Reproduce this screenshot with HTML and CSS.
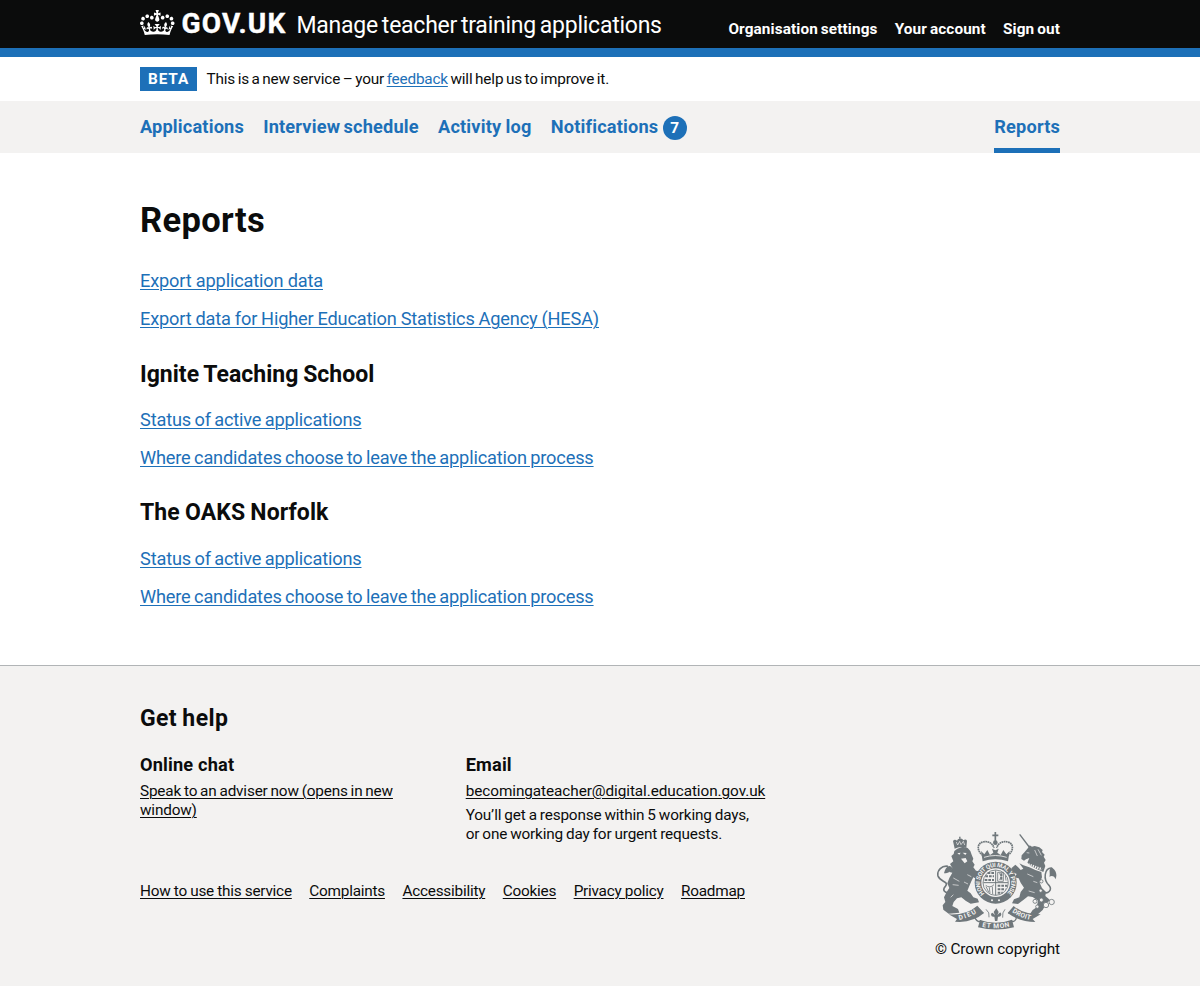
FILE: index.html
```html
<!DOCTYPE html>
<html lang="en">
<head>
<meta charset="utf-8">
<title>Reports - Manage teacher training applications - GOV.UK</title>
<link rel="stylesheet" href="styles.css">
</head>
<body>
<header class="header">
  <div class="container header-row">
    <a class="logo" href="#">
      <svg class="crown" viewBox="0 0 132 97" aria-hidden="true"><path fill="currentColor" d="M25 30.2c3.5 1.5 7.7-.2 9.1-3.7 1.5-3.6-.2-7.8-3.9-9.2-3.6-1.4-7.6.3-9.1 3.9-1.4 3.5.3 7.5 3.9 9zM9 39.5c3.6 1.5 7.8-.2 9.2-3.7 1.5-3.6-.2-7.8-3.9-9.1-3.6-1.5-7.6.2-9.1 3.8-1.4 3.5.3 7.5 3.8 9zM4.4 57.2c3.5 1.5 7.7-.2 9.1-3.8 1.5-3.6-.2-7.7-3.9-9.1-3.5-1.5-7.6.3-9.1 3.8-1.4 3.5.3 7.6 3.9 9.1zm38.3-21.4c3.5 1.5 7.7-.2 9.1-3.8 1.5-3.6-.2-7.7-3.9-9.1-3.6-1.5-7.6.3-9.1 3.8-1.3 3.6.4 7.7 3.9 9.1zm64.4-5.6c-3.6 1.5-7.8-.2-9.1-3.7-1.5-3.6.2-7.8 3.8-9.2 3.6-1.4 7.7.3 9.2 3.9 1.3 3.5-.4 7.5-3.9 9zm15.9 9.3c-3.6 1.5-7.7-.2-9.1-3.7-1.5-3.6.2-7.8 3.7-9.1 3.6-1.5 7.7.2 9.2 3.8 1.5 3.5-.3 7.5-3.8 9zm4.7 17.7c-3.6 1.5-7.8-.2-9.2-3.8-1.5-3.6.2-7.7 3.9-9.1 3.6-1.5 7.7.3 9.2 3.8 1.3 3.5-.4 7.6-3.9 9.1zM89.3 35.8c-3.6 1.5-7.8-.2-9.2-3.8-1.4-3.6.2-7.7 3.9-9.1 3.6-1.5 7.7.3 9.2 3.8 1.4 3.6-.3 7.7-3.9 9.1zM69.7 17.7l8.9 4.7V9.3l-8.9 2.8c-.2-.3-.5-.6-.9-.9L72.4 0H59.6l3.5 11.2c-.3.3-.6.5-.9.9l-8.8-2.8v13.1l8.8-4.7c.3.3.6.7.9.9l-5 15.4v.1c-.2.8-.4 1.6-.4 2.4 0 4.1 3.1 7.5 7 8.1h.2c.3 0 .7.1 1 .1.4 0 .7 0 1-.1h.2c4-.6 7.1-4.1 7.1-8.1 0-.8-.1-1.7-.4-2.4V34l-5.1-15.4c.4-.2.7-.6 1-.9zM66 92.8c16.9 0 32.8 1.1 47.1 3.2 4-16.9 8.9-26.7 14-33.5l-9.6-3.4c1 4.9 1.1 7.2 0 10.2-1.5-1.4-3-4.3-4.2-8.7L108.6 76c2.8-2 5-3.2 7.5-3.3-4.4 9.4-10 11.9-13.6 11.2-4.3-.8-6.3-4.6-5.6-7.9 1-4.7 5.7-5.9 8-.5 4.3-8.7-3-11.4-7.6-8.8 7.1-7.2 7.9-13.5 2.1-21.1-8 6.1-8.1 12.3-4.5 20.8-4.7-5.4-12.1-2.5-9.5 6.2 3.4-5.2 7.9-2 7.2 3.1-.6 4.3-6.4 7.8-13.5 7.2-10.3-.9-10.9-8-11.2-13.8 2.5-.5 7.1 1.8 11 7.3L80.2 60c-4.1 4.4-8 5.3-12.3 5.4 1.4-4.4 8-11.6 8-11.6H55.5s6.4 7.2 7.9 11.6c-4.2-.1-8-1-12.3-5.4l1.4 16.4c3.9-5.5 8.5-7.7 10.9-7.3-.3 5.8-.9 12.8-11.1 13.8-7.2.6-12.9-2.9-13.5-7.2-.7-5 3.8-8.3 7.1-3.1 2.7-8.7-4.6-11.6-9.4-6.2 3.7-8.5 3.6-14.7-4.6-20.8-5.8 7.6-5 13.9 2.2 21.1-4.7-2.6-11.9.1-7.7 8.8 2.3-5.5 7.1-4.2 8.1.5.7 3.3-1.3 7.1-5.7 7.9-3.5.7-9-1.8-13.5-11.2 2.5.1 4.7 1.3 7.5 3.3l-4.7-15.4c-1.2 4.4-2.7 7.2-4.3 8.7-1.1-3-.9-5.3 0-10.2l-9.5 3.4c5 6.9 9.9 16.7 14 33.5 14.8-2.1 30.8-3.2 47.7-3.2z"/></svg>
      <span class="logotype">GOV.UK</span>
      <span class="service">Manage teacher training applications</span>
    </a>
    <nav class="account">
      <a href="#">Organisation settings</a>
      <a href="#">Your account</a>
      <a href="#">Sign out</a>
    </nav>
  </div>
</header>

<div class="container phase">
  <strong class="tag">BETA</strong>
  <span class="phase-text">This is a new service – your <a href="#">feedback</a> will help us to improve it.</span>
</div>

<div class="primary">
  <nav class="container primary-row">
    <a href="#">Applications</a>
    <a class="interview" href="#">Interview schedule</a>
    <a href="#">Activity log</a>
    <a href="#">Notifications<span class="count">7</span></a>
    <a class="current" href="#">Reports</a>
  </nav>
</div>

<main class="container main">
  <h1>Reports</h1>
  <ul class="links exports">
    <li><a href="#">Export application data</a></li>
    <li><a class="hesa" href="#">Export data for Higher Education Statistics Agency (HESA)</a></li>
  </ul>
  <h2 class="ignite">Ignite Teaching School</h2>
  <ul class="links">
    <li><a href="#">Status of active applications</a></li>
    <li><a href="#">Where candidates choose to leave the application process</a></li>
  </ul>
  <h2 class="oaks">The OAKS Norfolk</h2>
  <ul class="links">
    <li><a href="#">Status of active applications</a></li>
    <li><a href="#">Where candidates choose to leave the application process</a></li>
  </ul>
</main>

<footer class="footer">
  <div class="container footer-row">
    <div class="support">
      <h2 class="help">Get help</h2>
      <div class="contacts">
        <section>
          <h3>Online chat</h3>
          <p><a href="#">Speak to an adviser now (opens in new window)</a></p>
        </section>
        <section>
          <h3>Email</h3>
          <p><a class="email" href="#">becomingateacher@digital.education.gov.uk</a></p>
          <p class="response">You’ll get a response within 5 working days,<br>or one working day for urgent requests.</p>
        </section>
      </div>
      <nav class="meta">
        <a href="#">How to use this service</a>
        <a href="#">Complaints</a>
        <a href="#">Accessibility</a>
        <a href="#">Cookies</a>
        <a href="#">Privacy policy</a>
        <a href="#">Roadmap</a>
      </nav>
    </div>
    <a class="copyright" href="#">
      <svg class="crest" viewBox="51 36 360 294" aria-hidden="true">
        <defs>
          <path id="garter" d="M193.6 221A47 47 0 1 1 260.4 221"/>
          <path id="dieu" d="M118 300Q150 293 178 274"/>
          <path id="droit" d="M276 276Q304 295 338 301"/>
          <path id="mon" d="M186 320Q228 330 272 319"/>
        </defs>
        <!-- Lion and its crown -->
        <g class="ink">
          <path d="M104 86L99 63Q104 56 111 62Q113 56 118 56L117 50H122L121 56Q127 55 130 61Q137 55 141 62L139 84Q121 77 104 86Z"/>
          <path d="M103 93L112 86L128 80L143 84L151 93L155 104L160 116L157 124L164 134L160 142L168 152L178 154L176 162L183 168L180 178L168 176L160 172L154 184L148 198L142 212L152 220L160 232L173 236L177 247L152 251L138 243L124 232L111 235L101 246L97 258L114 267L118 278L86 281L70 269L68 256L76 246L72 232L80 216L88 204L82 190L88 174L97 158L88 156L97 144L90 132L100 124L94 108L101 102Z"/>
          <path d="M72 160C88 160 102 148 94 140C84 134 76 144 72 160Z"/>
        </g>
        <path class="line" stroke-width="5" d="M92 216C74 222 66 210 76 199C89 184 60 186 54 168C50 150 66 136 84 139"/>
        <path class="cut" stroke-width="2" d="M109 66L113 75L119 64L123 74L130 64L134 75M100 174L118 184M98 194L116 196M132 186L144 192M142 164L154 170M92 232L100 224"/>
        <path class="field" d="M112 100L122 98L118 104ZM128 98L140 99L136 105ZM123 116L137 114L142 124L134 130Z"/>
        <!-- Unicorn -->
        <path class="line" stroke-width="4" d="M299 43L330 84"/>
        <g class="ink">
          <path d="M304 117L305 106L314 96L324 84L329 76L336 80L344 78L358 82L368 90L366 96L374 104L371 110L377 120L372 128L376 138L370 156L352 148L332 138L322 128L328 114L318 118L312 122Z"/>
          <path d="M298 130L310 136L328 142L346 150L364 156L366 172L359 188L366 204L378 216L376 228L390 240L378 252L368 270L352 284L330 282L338 270L350 262L354 242L338 231L324 229L310 240L294 252L276 250L282 238L298 232L302 216L312 203L302 188L296 175L284 172L290 162L278 156L274 145L286 134L296 143L302 150L310 146Z"/>
          <path d="M394 142C406 148 414 164 406 178C404 168 396 166 388 170C392 160 384 150 394 142Z"/>
        </g>
        <path class="line" stroke-width="4.5" d="M366 214C384 226 398 210 387 196C368 178 374 144 394 144"/>
        <path class="cut" stroke-width="7" stroke-dasharray="4 3" d="M306 127Q334 136 366 148"/>
        <path class="cut" stroke-width="2" d="M320 98L328 99M344 90L352 108M354 88L364 106M322 162L340 170M326 213L344 218M340 184L352 188"/>
        <g class="link">
          <circle cx="345" cy="244" r="6"/><circle cx="352" cy="260" r="5"/><circle cx="364" cy="240" r="6"/><circle cx="378" cy="255" r="8"/><circle cx="395" cy="246" r="8"/><circle cx="364" cy="184" r="5"/><circle cx="362" cy="212" r="5"/>
        </g>
        <!-- Central crown -->
        <g class="line">
          <path stroke-width="5" d="M226 36V64M217 46H235"/>
          <path stroke-width="5" stroke-dasharray="5 1.5" d="M189 106C170 94 170 70 189 66C205 62 218 70 222 84M263 106C282 94 282 70 263 66C247 62 234 70 230 84"/>
        </g>
        <g class="ink">
          <circle cx="226" cy="68" r="7"/>
          <path d="M188 124L183 93L193 103L202 90L210 105L220 98L216 86L226 91L236 86L232 98L242 105L250 90L259 103L269 93L264 124Q226 112 188 124Z"/>
        </g>
        <path class="cut" stroke-width="2.5" d="M192 112Q226 101 260 112"/>
        <!-- Garter and quartered shield -->
        <circle class="ink" cx="227" cy="188" r="63"/>
        <circle class="field" cx="227" cy="188" r="43"/>
        <text class="motto" font-size="18"><textPath href="#garter" textLength="219">HONI SOIT QUI MAL Y PENSE</textPath></text>
        <circle class="field" cx="216" cy="241" r="3"/><circle class="field" cx="237" cy="241" r="3"/>
        <g class="line" stroke-width="2.5">
          <circle cx="227" cy="188" r="38"/>
          <path stroke-width="3" d="M227 151V226M190 188H264"/>
          <path d="M233 157H250V184H233ZM238 160L244 168L239 180M256 166L258 182M197 196Q210 206 222 194M198 200L206 216M208 202L210 220M217 200L218 222"/>
        </g>
        <path class="line" stroke-width="6" stroke-dasharray="8 3" d="M203 159H222M196 169H222M194 180H222M233 197H262M233 208H256M233 218H248M244 160V182"/>
        <!-- Ribbon and fleur-de-lis -->
        <g class="ink">
          <path d="M86 283Q139 286 172 257L192 279Q164 304 119 306L105 305L111 297Z"/>
          <path d="M281 258Q309 283 362 283L338 297L346 306Q298 306 263 279Z"/>
          <path d="M180 300Q228 317 276 299L282 322Q228 335 174 322Z"/>
        </g>
        <path class="line" stroke-width="4" d="M190 278Q160 281 166 296Q174 309 184 302M265 279Q294 281 288 297Q282 309 272 302"/>
        <path class="ink" d="M229 265L236 276L232 286Q243 270 244 284Q242 292 234 290L232 303H225L223 290Q214 292 213 284Q215 272 225 286L221 276Z"/>
        <path class="line" stroke-width="2.5" d="M198 268Q210 277 207 292M255 268Q246 277 248 293"/>
        <text class="motto" font-size="20"><textPath href="#dieu" textLength="56">DIEU</textPath></text>
        <text class="motto" font-size="20"><textPath href="#mon" textLength="84">ET MON</textPath></text>
        <text class="motto" font-size="20"><textPath href="#droit" textLength="60">DROIT</textPath></text>
      </svg>
      <span>© Crown copyright</span>
    </a>
  </div>
</footer>
</body>
</html>
```
FILE: styles.css
```css
* { box-sizing: border-box; }

body {
  margin: 0;
  background: #fff;
  color: #0b0c0c;
  font-family: Roboto, "Liberation Sans", sans-serif;
  font-size: 18.2px;
  line-height: 23.96px;
  letter-spacing: -0.17px;
}

h1, h2, h3, p, ul { margin: 0; padding: 0; }
ul { list-style: none; }

a { color: #1d70b8; text-decoration-thickness: 1px; text-underline-offset: 2px; }

.container { width: 920px; margin: 0 auto; }

/* Header */
.header { background: #0b0c0c; border-bottom: 9px solid #1d70b8; }
.header-row { display: flex; justify-content: space-between; height: 48px; }
.header a { color: #fff; text-decoration: none; }
.logo { display: flex; align-items: baseline; padding-top: 10.4px; }
.crown { width: 34.5px; height: 25.4px; align-self: flex-start; }
.logotype {
  width: 105px;
  margin: 0 10px 0 7px;
  font-size: 28px;
  font-weight: 700;
  line-height: 28px;
  letter-spacing: 1.2px;
  -webkit-text-stroke: 0.4px #fff;
}
.service {
  font-size: 23px;
  line-height: 28px;
  letter-spacing: -0.25px;
  word-spacing: -1.5px;
  white-space: nowrap;
}
.account {
  display: flex;
  gap: 17.2px;
  padding-top: 19.6px;
  font-size: 15.33px;
  font-weight: 700;
  line-height: 19.17px;
  letter-spacing: 0.1px;
  word-spacing: -0.9px;
}

/* Phase banner */
.phase {
  display: flex;
  align-items: center;
  gap: 9.5px;
  height: 43.6px;
  font-size: 15.33px;
  line-height: 19.17px;
  word-spacing: -1.1px;
}
.phase-text { padding-top: 1.4px; letter-spacing: -0.15px; }
.phase-text a { letter-spacing: -0.2px; }
.tag {
  width: 57px;
  height: 24px;
  padding-left: 8px;
  background: #1d70b8;
  color: #fff;
  line-height: 24px;
  letter-spacing: 0.9px;
}

/* Primary navigation */
.primary { height: 52.4px; background: #f3f2f1; }
.primary-row { display: flex; gap: 19.3px; height: 100%; }
.primary-row a {
  padding-top: 14px;
  font-weight: 700;
  letter-spacing: 0.16px;
  word-spacing: -0.4px;
  text-decoration: none;
}
.primary-row .interview { word-spacing: -1.3px; }
.primary-row .current { margin-left: auto; border-bottom: 5px solid #1d70b8; }
.count {
  display: inline-block;
  width: 24px;
  height: 24px;
  margin-left: 4.5px;
  border-radius: 50%;
  background: #1d70b8;
  color: #fff;
  font-size: 15.33px;
  line-height: 24px;
  text-align: center;
}

/* Content */
.main { padding: 48.3px 0 56.2px; }
h1 { font-size: 34.5px; line-height: 38.33px; letter-spacing: 0.36px; margin-bottom: 29.55px; }
h2 { font-size: 23px; line-height: 28.75px; letter-spacing: 0.1px; }
.main h2 { margin: 29.1px 0 18.82px; }
.ignite { letter-spacing: 0; word-spacing: -0.8px; }
.oaks { word-spacing: -0.7px; }
.links { display: grid; gap: 14.37px; word-spacing: -0.9px; }
.exports { word-spacing: 0; }
.hesa { word-spacing: -0.35px; }

/* Footer */
.footer {
  height: 321px;
  padding-top: 39px;
  background: #f3f2f1;
  border-top: 1px solid #b1b4b6;
  font-size: 15.33px;
  line-height: 19.17px;
  word-spacing: -0.75px;
}
.footer a { color: #0b0c0c; }
.footer-row { display: flex; justify-content: space-between; align-items: flex-start; }
.help { letter-spacing: 0.38px; }
.contacts {
  display: grid;
  grid-template-columns: 285px 310px;
  gap: 40.7px;
  margin-top: 18.5px;
}
.contacts h3 { font-size: 18.2px; line-height: 23.96px; letter-spacing: 0.16px; word-spacing: 0; }
.contacts p { margin-top: 5.4px; }
.contacts .response { margin-top: 4.6px; word-spacing: -0.6px; }
.email { letter-spacing: -0.076px; }
.meta { display: flex; gap: 17.5px; margin-top: 37.8px; letter-spacing: -0.23px; word-spacing: -0.3px; white-space: nowrap; }
.copyright {
  display: flex;
  flex-direction: column;
  align-items: center;
  gap: 9.8px;
  width: 125px;
  margin-top: 126.4px;
  letter-spacing: -0.08px;
  white-space: nowrap;
  text-decoration: none;
}
.footer .copyright { word-spacing: -0.3px; }

/* Royal coat of arms */
.crest { width: 120px; height: 98px; display: block; margin-right: 1.5px; }
.ink { fill: #6f777b; }
.line { fill: none; stroke: #6f777b; }
.link { fill: #f3f2f1; stroke: #6f777b; stroke-width: 2.5; }
.cut { fill: none; stroke: #f3f2f1; }
.field { fill: #f3f2f1; }
.motto { fill: #f3f2f1; font-weight: 700; letter-spacing: 0; word-spacing: 0; }
```
